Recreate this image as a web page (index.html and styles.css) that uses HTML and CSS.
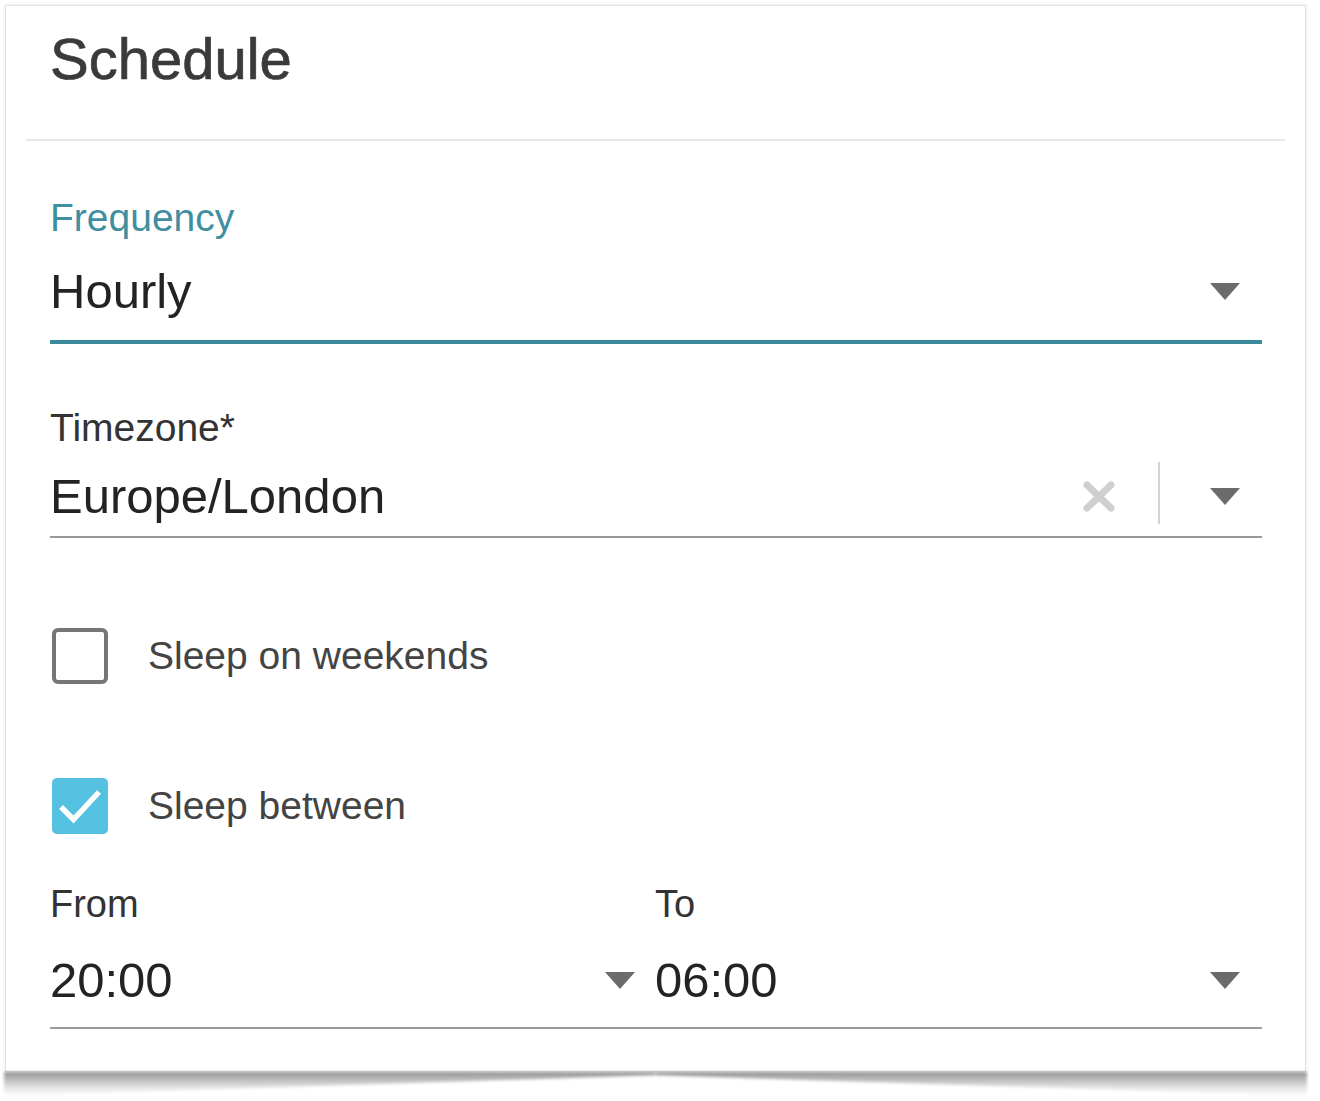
FILE: index.html
```html
<!DOCTYPE html>
<html lang="en">
<head>
<meta charset="utf-8">
<title>Schedule</title>
<link rel="stylesheet" href="styles.css">
</head>
<body>
<div class="card">
  <div class="card-header">
    <h1 class="title">Schedule</h1>
  </div>
  <div class="card-body">
    <div class="field field-frequency is-focused">
      <div class="field-label label-accent">Frequency</div>
      <div class="field-control">
        <span class="field-value">Hourly</span>
        <svg class="caret" viewBox="0 0 30 17" width="30" height="17"><path d="M0 0H30L15 17Z"/></svg>
      </div>
    </div>

    <div class="field field-timezone">
      <div class="field-label">Timezone*</div>
      <div class="field-control">
        <span class="field-value">Europe/London</span>
        <svg class="clear" viewBox="0 0 32 31" width="32" height="31"><path d="M4 4L28 27M28 4L4 27"/></svg>
        <span class="separator"></span>
        <svg class="caret caret-tz" viewBox="0 0 30 17" width="30" height="17"><path d="M0 0H30L15 17Z"/></svg>
      </div>
    </div>

    <div class="check-row check-row-weekends">
      <svg class="checkbox" viewBox="0 0 56 56" width="56" height="56"><rect class="box-empty" x="2" y="2" width="52" height="52" rx="4"/></svg>
      <span class="check-label">Sleep on weekends</span>
    </div>

    <div class="check-row check-row-between">
      <svg class="checkbox" viewBox="0 0 56 56" width="56" height="56"><rect class="box-checked" x="0" y="0" width="56" height="56" rx="5"/><path class="tick" d="M9 29L21.5 41.5L47 14"/></svg>
      <span class="check-label">Sleep between</span>
    </div>

    <div class="time-row">
      <div class="field field-time field-from">
        <div class="field-label label-small">From</div>
        <div class="field-control">
          <span class="field-value">20:00</span>
          <svg class="caret caret-from" viewBox="0 0 30 17" width="30" height="17"><path d="M0 0H30L15 17Z"/></svg>
        </div>
      </div>
      <div class="field field-time field-to">
        <div class="field-label label-small">To</div>
        <div class="field-control">
          <span class="field-value">06:00</span>
          <svg class="caret" viewBox="0 0 30 17" width="30" height="17"><path d="M0 0H30L15 17Z"/></svg>
        </div>
      </div>
    </div>
  </div>
</div>
<div class="card-shadow" aria-hidden="true">
  <div class="shadow-half shadow-left"></div>
  <div class="shadow-half shadow-right"></div>
</div>
</body>
</html>
```

FILE: styles.css
```css
html {
  background: #ffffff;
}

body {
  margin: 0;
  font-family: "Liberation Sans", Arial, Helvetica, sans-serif;
  color: #262626;
}

.card {
  box-sizing: border-box;
  width: 1301px;
  margin: 5px 0 0 5px;
  background: #ffffff;
  border: 1px solid #e1e1e1;
  box-shadow: 0 0 4px rgba(0, 0, 0, 0.10);
}

.card-shadow {
  display: flex;
  width: 1303px;
  height: 24px;
  margin-left: 4px;
  filter: blur(1.5px);
}

.shadow-half {
  flex: 1;
  background: linear-gradient(to bottom, rgba(0, 0, 0, 0.42), rgba(0, 0, 0, 0.12) 60%, rgba(0, 0, 0, 0));
}

.shadow-left {
  clip-path: polygon(0 0, 100% 0, 100% 14%, 0 100%);
}

.shadow-right {
  clip-path: polygon(0 0, 100% 0, 100% 100%, 0 14%);
}

.card-header {
  margin: 0 20px;
  padding: 20px 0 47px 24px;
  border-bottom: 2px solid #e8e8e8;
}

.title {
  margin: 0;
  font-size: 58px;
  line-height: 66px;
  font-weight: 400;
  color: #3a3a3a;
  -webkit-text-stroke: 0.7px #3a3a3a;
}

.card-body {
  padding: 0 43px 42px 44px;
}

.field-label {
  font-size: 39px;
  line-height: 44px;
  color: #333333;
  white-space: nowrap;
}

.label-accent {
  color: #3f8fa1;
}

.label-small {
  font-size: 38px;
}

.field-control {
  display: flex;
  align-items: center;
  height: 56px;
}

.field-value {
  flex: 1;
  font-size: 49px;
  line-height: 56px;
  color: #232323;
  white-space: nowrap;
}

.caret {
  flex: none;
  margin-right: 22px;
  fill: #6b6b6b;
}

.field-frequency {
  margin-top: 55px;
}

.field-frequency .field-control {
  margin-top: 23px;
  padding-bottom: 21px;
  border-bottom: 4px solid #3a8a9c;
}

.field-timezone {
  margin-top: 62px;
}

.field-timezone .field-control {
  margin-top: 18px;
  padding-bottom: 12px;
  border-bottom: 2px solid #9a9a9a;
}

.clear {
  flex: none;
  margin-right: 43px;
  stroke: #cfcfcf;
  stroke-width: 7;
  stroke-linecap: round;
  fill: none;
}

.separator {
  flex: none;
  align-self: flex-end;
  width: 2px;
  height: 62px;
  margin-right: 50px;
  background: #d3d3d3;
}

.check-row {
  display: flex;
  align-items: center;
  height: 56px;
  padding-left: 2px;
}

.check-row-weekends {
  margin-top: 90px;
}

.check-row-between {
  margin-top: 94px;
}

.checkbox {
  flex: none;
  margin-right: 40px;
}

.box-empty {
  fill: none;
  stroke: #767676;
  stroke-width: 4;
}

.box-checked {
  fill: #53c1df;
}

.tick {
  fill: none;
  stroke: #ffffff;
  stroke-width: 5.5;
}

.check-label {
  font-size: 39px;
  line-height: 44px;
  color: #444444;
  white-space: nowrap;
}

.time-row {
  display: grid;
  grid-template-columns: 605px 1fr;
  margin-top: 48px;
}

.field-time .field-control {
  margin-top: 26px;
  padding-bottom: 19px;
  border-bottom: 2px solid #9a9a9a;
}

.caret-from {
  margin-right: 20px;
}
```
